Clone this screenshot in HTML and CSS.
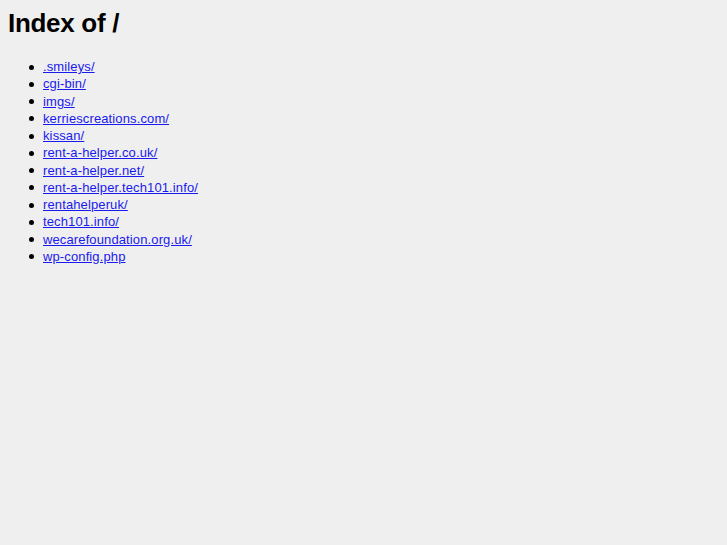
FILE: index.html
```html
<!DOCTYPE html>
<html>
<head>
    <title>Index of /</title>
    <link rel="stylesheet" href="styles.css">
</head>
<body>
    <h1>Index of /</h1>
    <ul class="listing">
        <li><a href=".smileys/">.smileys/</a></li>
        <li><a href="cgi-bin/">cgi-bin/</a></li>
        <li><a href="imgs/">imgs/</a></li>
        <li><a href="kerriescreations.com/">kerriescreations.com/</a></li>
        <li><a href="kissan/">kissan/</a></li>
        <li><a href="rent-a-helper.co.uk/">rent-a-helper.co.uk/</a></li>
        <li><a href="rent-a-helper.net/">rent-a-helper.net/</a></li>
        <li><a href="rent-a-helper.tech101.info/">rent-a-helper.tech101.info/</a></li>
        <li><a href="rentahelperuk/">rentahelperuk/</a></li>
        <li><a href="tech101.info/">tech101.info/</a></li>
        <li><a href="wecarefoundation.org.uk/">wecarefoundation.org.uk/</a></li>
        <li><a href="wp-config.php">wp-config.php</a></li>
    </ul>
</body>
</html>
```

FILE: styles.css
```css
html { background: #efefef; }
body { font-family: "Liberation Sans", Arial, sans-serif; font-size: 13px; margin: 8px; color: #000; }
h1 { font-size: 26px; margin: 0 0 20px; line-height: 30px; letter-spacing: -0.3px; }
.listing { margin: 0; padding-left: 35px; list-style: none; }
.listing li { line-height: 17.27px; position: relative; }
.listing li::before { content: ""; position: absolute; left: -14px; top: 6.5px; width: 5px; height: 5px; border-radius: 50%; background: #000; }
.listing a { color: #1a1aee; letter-spacing: 0.12px; }
```
